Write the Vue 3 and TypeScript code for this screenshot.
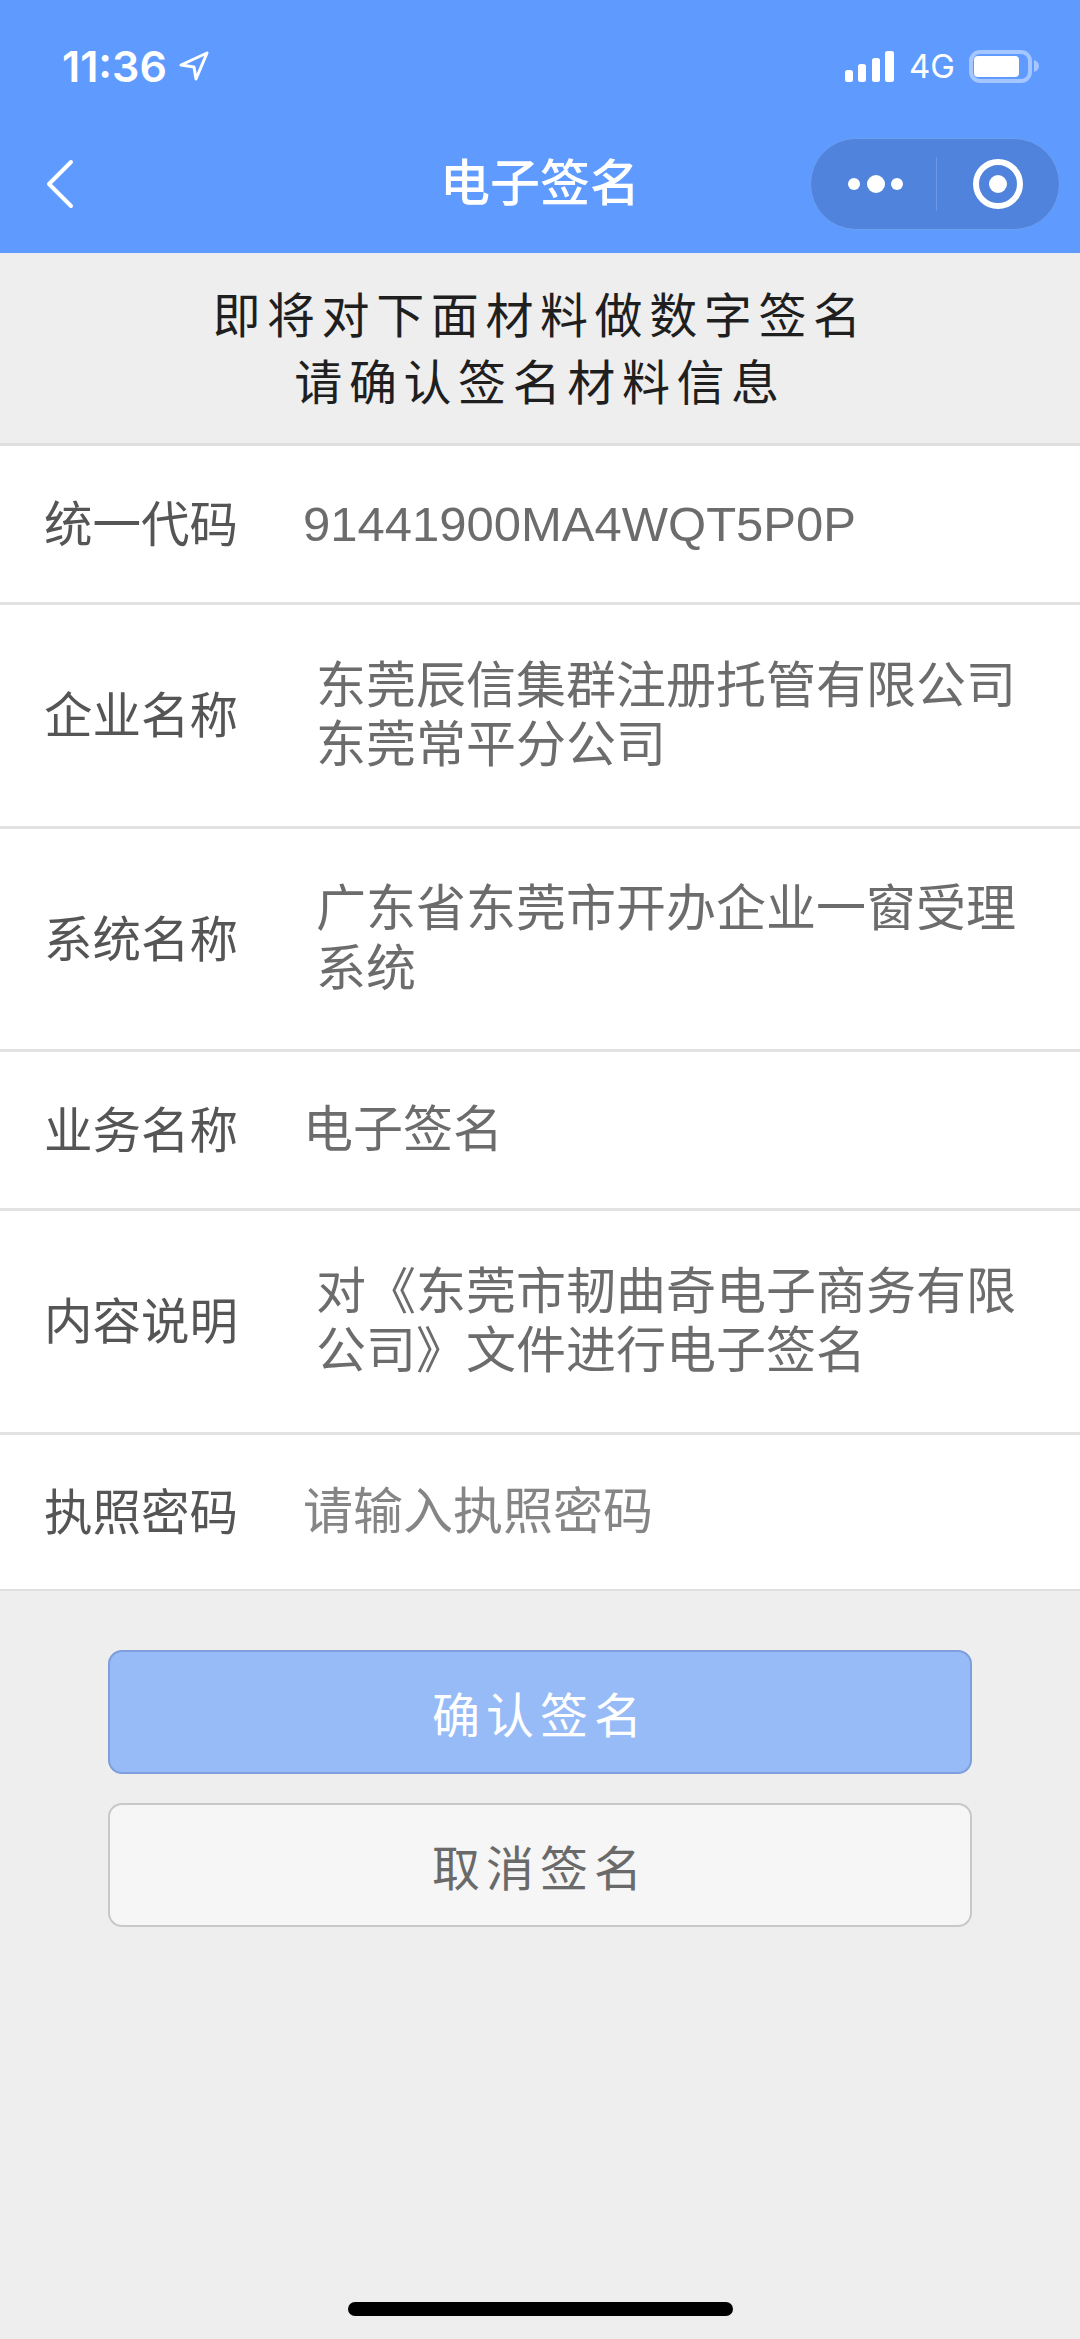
<script setup lang="ts">
interface InfoRow {
  label: string;
  value: string;
  multi?: boolean;
  placeholder?: boolean;
  code?: boolean;
}

const rows: InfoRow[] = [
  { label: '统一代码', value: '91441900MA4WQT5P0P', code: true },
  { label: '企业名称', value: '东莞辰信集群注册托管有限公司东莞常平分公司', multi: true },
  { label: '系统名称', value: '广东省东莞市开办企业一窗受理系统', multi: true },
  { label: '业务名称', value: '电子签名' },
  { label: '内容说明', value: '对《东莞市韧曲奇电子商务有限公司》文件进行电子签名', multi: true },
  { label: '执照密码', value: '请输入执照密码', placeholder: true },
];
</script>

<template>
  <div class="page">
    <header class="header">
      <div class="status-bar">
        <div class="status-left">
          <span class="time">11:36</span>
          <svg class="location" width="30" height="30" viewBox="0 0 30 30" fill="none" stroke="#fff" stroke-width="3" stroke-linejoin="round">
            <path d="M28 2 2 14l13 2 2 12z" />
          </svg>
        </div>
        <div class="status-right">
          <svg width="50" height="31" viewBox="0 0 50 31" fill="#fff">
            <rect x="0" y="19" width="8" height="12" rx="2.5" />
            <rect x="13" y="13" width="8" height="18" rx="2.5" />
            <rect x="27" y="7" width="8" height="24" rx="2.5" />
            <rect x="40" y="0" width="9" height="31" rx="2.5" />
          </svg>
          <span class="network">4G</span>
          <svg width="70" height="33" viewBox="0 0 70 33" fill="none">
            <rect x="2" y="2" width="59" height="29" rx="9" stroke="#a5c6ff" stroke-width="4" />
            <rect x="5" y="6" width="45" height="21" rx="4" fill="#fff" />
            <path d="M65 10c3 1 5 3 5 6s-2 5-5 6z" fill="#a5c6ff" />
          </svg>
        </div>
      </div>
      <div class="nav-bar">
        <svg class="back" width="30" height="50" viewBox="0 0 30 50" fill="none" stroke="#fff" stroke-width="4" stroke-linecap="round" stroke-linejoin="round">
          <path d="M27 3 5 25l22 22" />
        </svg>
        <h1 class="title">电子签名</h1>
        <div class="capsule">
          <svg class="more" width="56" height="18" viewBox="0 0 56 18" fill="#fff">
            <circle cx="6" cy="9" r="6" />
            <circle cx="28" cy="9" r="9" />
            <circle cx="49" cy="9" r="6" />
          </svg>
          <span class="capsule-line"></span>
          <svg class="target" width="50" height="50" viewBox="0 0 50 50" fill="none">
            <circle cx="25" cy="25" r="22" stroke="#fff" stroke-width="6" />
            <circle cx="25" cy="25" r="9" fill="#fff" />
          </svg>
        </div>
      </div>
    </header>

    <section class="intro">
      <p>即将对下面材料做数字签名</p>
      <p>请确认签名材料信息</p>
    </section>

    <section class="info-list">
      <div v-for="row in rows" :key="row.label" class="info-row" :class="{ 'is-multi': row.multi }">
        <div class="label">{{ row.label }}</div>
        <div class="value" :class="{ placeholder: row.placeholder, code: row.code }">{{ row.value }}</div>
      </div>
    </section>

    <div class="actions">
      <button class="btn btn-primary" type="button">确认签名</button>
      <button class="btn btn-default" type="button">取消签名</button>
    </div>

    <div class="home-wrap">
      <div class="home-indicator"></div>
    </div>
  </div>
</template>

<style>
html,
body {
  margin: 0;
  background: #eeeeee;
}
</style>

<style scoped>
.page {
  width: 1080px;
  height: 2339px;
  display: flex;
  flex-direction: column;
  background: #eeeeee;
  font-family: 'Liberation Sans', 'Noto Sans CJK SC', sans-serif;
  overflow: hidden;
}

.header {
  height: 253px;
  background: #5f9bff;
  color: #fff;
  box-sizing: border-box;
  flex-shrink: 0;
}

.status-bar {
  height: 118px;
  box-sizing: border-box;
  padding: 44px 41px 0 62px;
  display: flex;
  justify-content: space-between;
  align-items: flex-start;
}

.status-left,
.status-right {
  display: flex;
  align-items: center;
  height: 44px;
}

.time {
  font-family: Inter, 'Liberation Sans', sans-serif;
  font-size: 43px;
  font-weight: 600;
  line-height: 44px;
}

.location {
  margin-left: 12px;
}

.network {
  font-family: Inter, 'Liberation Sans', sans-serif;
  font-size: 33px;
  margin: 0 14px 0 14px;
  line-height: 44px;
}

.nav-bar {
  height: 132px;
  display: flex;
  align-items: center;
  justify-content: space-between;
  padding: 0 20px 0 44px;
  position: relative;
}

.title {
  position: absolute;
  left: 0;
  right: 0;
  text-align: center;
  margin: 0;
  font-size: 50px;
  font-weight: 500;
  line-height: 60px;
  pointer-events: none;
}

.capsule {
  width: 250px;
  height: 92px;
  border-radius: 46px;
  background: #4f83dc;
  border: 1px solid #6d9ff0;
  display: flex;
  align-items: center;
  box-sizing: border-box;
  padding: 0 36px 0 37px;
  justify-content: space-between;
}

.capsule-line {
  width: 1px;
  height: 54px;
  margin-right: 5px;
  background: #6a98e4;
}

.intro {
  height: 193px;
  box-sizing: border-box;
  padding-top: 30px;
  text-align: center;
  border-bottom: 3px solid #dfdfdf;
  flex-shrink: 0;
}

.intro p {
  margin: 0;
  font-size: 48px;
  line-height: 67px;
  letter-spacing: 6.6px;
  color: #1f1f1f;
}

.info-list {
  background: #fff;
  flex-shrink: 0;
  border-bottom: 2px solid #dfdfdf;
}

.info-row {
  display: flex;
  align-items: center;
  min-height: 159px;
  box-sizing: border-box;
  padding: 0 44px 6px;
  border-bottom: 3px solid #e2e2e2;
}

.info-row:last-child {
  border-bottom: none;
  min-height: 154px;
}

.info-row.is-multi {
  min-height: 223.5px;
}

.label {
  width: 259px;
  flex-shrink: 0;
  font-size: 48.5px;
  color: #555555;
}

.value {
  font-size: 50px;
  line-height: 59.5px;
  padding-top: 8px;
  color: #6c6c6c;
}

.value.code {
  font-size: 49px;
}

.is-multi .value {
  padding-left: 13px;
}

.value.placeholder {
  color: #858585;
}

.actions {
  display: flex;
  flex-direction: column;
  gap: 29px;
  padding: 59px 108px 0;
}

.btn {
  height: 124px;
  border-radius: 14px;
  font-family: inherit;
  font-size: 48px;
  letter-spacing: 6px;
  padding: 0;
}

.btn-primary {
  background: #97bbf7;
  border: 2px solid #7d9fdc;
  color: #ffffff;
}

.btn-default {
  background: #f6f6f6;
  border: 2px solid #c8c8c8;
  color: #6a6a6a;
}

.home-wrap {
  margin-top: auto;
  padding-bottom: 23px;
  display: flex;
  justify-content: center;
}

.home-indicator {
  width: 385px;
  height: 14px;
  border-radius: 7px;
  background: #000;
}
</style>
